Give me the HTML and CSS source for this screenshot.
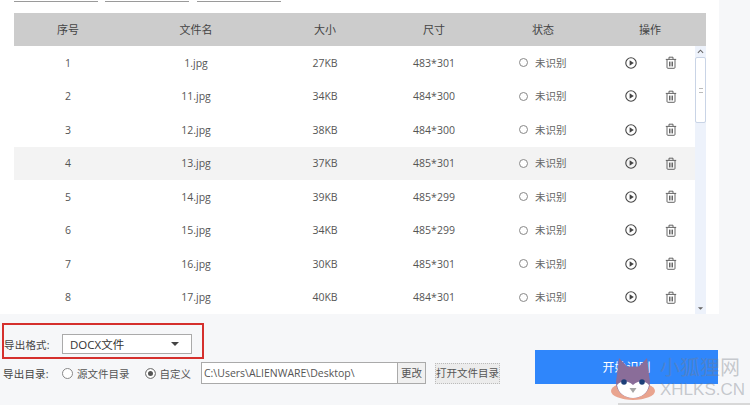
FILE: index.html
```html
<!DOCTYPE html>
<html lang="zh-CN">
<head>
<meta charset="utf-8">
<title>导出</title>
<link rel="stylesheet" href="styles.css">
</head>
<body>
<svg width="0" height="0" class="defs">
  <symbol id="play" viewBox="0 0 12 12">
    <circle cx="6" cy="6" r="5.2" fill="none" stroke="#444" stroke-width="1.1"/>
    <path d="M4.6 3.2 8.8 6 4.6 8.8z" fill="#444"/>
  </symbol>
  <symbol id="trash" viewBox="0 0 12 13">
    <path d="M.8 3.4h10.4M4 3.2V1.2h4v2M2 3.6v7.8c0 .6.3.9.9.9h6.2c.6 0 .9-.3.9-.9V3.6M4.5 5.6v4.8M6 5.6v4.8M7.5 5.6v4.8" fill="none" stroke="#555" stroke-width=".9"/>
  </symbol>
</svg>
<main class="page">
  <div class="panel">
    <div class="tabs"><span class="tab"></span><span class="tab"></span><span class="tab"></span></div>
    <div class="table">
      <div class="row head">
        <span>序号</span><span>文件名</span><span>大小</span><span>尺寸</span><span>状态</span><span>操作</span>
      </div>
      <div class="body">
        <div class="row"><span>1</span><span>1.jpg</span><span>27KB</span><span>483*301</span><span class="status"><i class="dot"></i>未识别</span><span class="ops"><svg class="ic"><use href="#play"/></svg><svg class="ic tall"><use href="#trash"/></svg></span></div>
        <div class="row"><span>2</span><span>11.jpg</span><span>34KB</span><span>484*300</span><span class="status"><i class="dot"></i>未识别</span><span class="ops"><svg class="ic"><use href="#play"/></svg><svg class="ic tall"><use href="#trash"/></svg></span></div>
        <div class="row"><span>3</span><span>12.jpg</span><span>38KB</span><span>484*300</span><span class="status"><i class="dot"></i>未识别</span><span class="ops"><svg class="ic"><use href="#play"/></svg><svg class="ic tall"><use href="#trash"/></svg></span></div>
        <div class="row hover"><span>4</span><span>13.jpg</span><span>37KB</span><span>485*301</span><span class="status"><i class="dot"></i>未识别</span><span class="ops"><svg class="ic"><use href="#play"/></svg><svg class="ic tall"><use href="#trash"/></svg></span></div>
        <div class="row"><span>5</span><span>14.jpg</span><span>39KB</span><span>485*299</span><span class="status"><i class="dot"></i>未识别</span><span class="ops"><svg class="ic"><use href="#play"/></svg><svg class="ic tall"><use href="#trash"/></svg></span></div>
        <div class="row"><span>6</span><span>15.jpg</span><span>34KB</span><span>485*299</span><span class="status"><i class="dot"></i>未识别</span><span class="ops"><svg class="ic"><use href="#play"/></svg><svg class="ic tall"><use href="#trash"/></svg></span></div>
        <div class="row"><span>7</span><span>16.jpg</span><span>30KB</span><span>485*301</span><span class="status"><i class="dot"></i>未识别</span><span class="ops"><svg class="ic"><use href="#play"/></svg><svg class="ic tall"><use href="#trash"/></svg></span></div>
        <div class="row"><span>8</span><span>17.jpg</span><span>40KB</span><span>484*301</span><span class="status"><i class="dot"></i>未识别</span><span class="ops"><svg class="ic"><use href="#play"/></svg><svg class="ic tall"><use href="#trash"/></svg></span></div>
        <div class="scrollbar">
          <svg class="arrow" viewBox="0 0 8 5"><path d="M1 4 4 1l3 3" fill="none" stroke="#666" stroke-width="1.2"/></svg>
          <div class="thumb"><b></b></div>
          <svg class="arrow" viewBox="0 0 8 5"><path d="M1 1h6L4 4z" fill="#666"/></svg>
        </div>
      </div>
    </div>
  </div>
  <footer class="foot">
    <div class="settings">
      <div class="format">
        <span class="label">导出格式:</span>
        <div class="select"><span>DOCX文件</span><i class="caret"></i></div>
      </div>
      <div class="dir">
        <span class="label">导出目录:</span>
        <span class="radio"><i class="dot big"></i>源文件目录</span>
        <span class="radio second"><i class="dot big on"></i>自定义</span>
        <div class="path"><span class="path-text">C:\Users\ALIENWARE\Desktop\</span><span class="change">更改</span></div>
        <span class="open">打开文件目录</span>
      </div>
    </div>
    <button class="start">开始识别</button>
  </footer>
  <div class="mark">
    <svg class="cat" viewBox="0 0 44 42">
      <ellipse cx="22" cy="33" rx="22" ry="9" fill="#e9a48f"/>
      <path d="M8 0 16 8.500h12L36 0l3 24c0 9-7 16-17 16S5 33 5 24z" fill="#8a6d99"/>
      <path d="M6 27c5-5 10-5 16 0 6-5 11-5 16 0-1 8-8 13-16 13S7 35 6 27z" fill="#fff"/>
      <circle cx="13" cy="24" r="2.800" fill="#1d3f78"/>
      <circle cx="31" cy="24" r="2.800" fill="#1d3f78"/>
      <path d="M18.500 30h7L22 35z" fill="#a5a5a5"/>
    </svg>
    <div class="mark-text"><span class="mark-cn">小狐狸网</span><span class="mark-en">XHLKS.CN</span></div>
  </div>
  <div class="edge"></div>
</main>
</body>
</html>
```
FILE: styles.css
```css
* { box-sizing: border-box; }
html, body { margin: 0; padding: 0; }
body {
  width: 750px;
  height: 405px;
  overflow: hidden;
  background: #f6f7f9;
  font-family: "Open Sans", "Noto Sans CJK SC", sans-serif;
  font-size: 10.5px;
  color: #555;
}
.defs { position: absolute; }
.page { position: relative; width: 750px; height: 405px; display: flex; flex-direction: column; }
.panel { width: 719px; height: 314px; background: #fff; padding-left: 14px; }
.tabs { height: 13px; display: flex; gap: 7px; }
.tab { width: 84px; height: 2px; background: #fff; border-bottom: 1px solid #9a9a9a; }
.tab:last-child { margin-left: 1px; }
.table { width: 692px; }
.row {
  display: grid;
  grid-template-columns: 108px 148px 110px 108px 110px 104px;
  align-items: center;
  height: 33.5px;
  text-align: center;
  line-height: 16px;
}
.head { height: 33px; background: #cccccc; color: #444; font-size: 11px; }
.hover { background: #f3f3f3; }
.body { position: relative; height: 268px; }
.status { display: flex; align-items: center; padding-left: 31px; color: #666; }
.dot {
  display: inline-block;
  width: 9px;
  height: 9px;
  margin-right: 7px;
  border: 1px solid #888;
  border-radius: 50%;
  background: #fff;
}
.ops { display: flex; align-items: center; gap: 28px; padding-left: 27px; }
.ic { width: 12px; height: 12px; flex: none; }
.tall { height: 13px; }
.scrollbar {
  position: absolute;
  right: 0;
  top: 0;
  bottom: 0;
  width: 11px;
  background: #edf2fb;
  display: flex;
  flex-direction: column;
  align-items: center;
  justify-content: space-between;
  padding: 3px 0;
}
.arrow { width: 7px; height: 5px; flex: none; }
.thumb {
  width: 11px;
  height: 66px;
  margin-top: 3px;
  margin-bottom: auto;
  background: #fff;
  border: 1px solid #c9d4e6;
  border-radius: 2px;
  display: flex;
  align-items: center;
  justify-content: center;
}
.thumb b { width: 4px; height: 5px; border-top: 1px solid #bbb; border-bottom: 1px solid #bbb; }
.foot { position: relative; flex: 1; display: flex; }
.settings { width: 535px; padding: 9px 0 0 2px; }
.format {
  width: 202px;
  height: 36px;
  border: 2px solid #d5302d;
  display: flex;
  align-items: center;
  padding: 6px 0 0 0;
}
.label { width: 58px; flex: none; color: #444; letter-spacing: .2px; white-space: nowrap; }
.dir .label { width: 59px; }
.select {
  width: 130px;
  height: 20px;
  border: 1px solid #aaa;
  background: #fff;
  display: flex;
  align-items: center;
  justify-content: space-between;
  padding: 0 12px 0 7px;
  color: #333;
  font-size: 11.5px;
}
.caret { width: 0; height: 0; border: 4px solid transparent; border-top: 4px solid #444; border-bottom: 0; }
.dir { display: flex; align-items: center; height: 22px; margin-top: 3px; padding-left: 1px; }
.radio { display: flex; align-items: center; color: #555; white-space: nowrap; }
.big { width: 11px; height: 11px; margin-right: 4px; }
.on { background: #555; box-shadow: inset 0 0 0 2px #fff; }
.second { margin-left: 15px; }
.path {
  width: 225px;
  height: 22px;
  margin-left: 10px;
  display: flex;
  border: 1px solid #aaa;
  background: #fff;
}
.path-text { flex: 1; padding-left: 2px; line-height: 20px; white-space: nowrap; overflow: hidden; color: #555; }
.change { width: 28px; flex: none; background: #f0f0f0; border-left: 1px solid #aaa; text-align: center; line-height: 20px; }
.open {
  width: 65px;
  height: 21px;
  margin-left: 9px;
  background: #ececec;
  border: 1px dotted #bbb;
  text-align: center;
  line-height: 19px;
  white-space: nowrap;
}
.start {
  width: 183px;
  height: 34px;
  margin-top: 36px;
  border: 0;
  background: #2f86fb;
  color: #fff;
  font: inherit;
  font-size: 12px;
}
.mark { position: absolute; left: 611px; top: 358px; display: flex; gap: 5px; pointer-events: none; }
.cat { width: 44px; height: 42px; }
.mark-text { display: flex; flex-direction: column; line-height: 1; color: rgba(120,125,135,.4); }
.mark-cn { font-size: 20px; }
.mark-en { font-size: 17px; margin-top: 3px; font-family: "Liberation Sans", sans-serif; }
.edge { position: absolute; left: 618px; right: 0; bottom: 0; height: 2px; background: #d8d8d8; }
```
